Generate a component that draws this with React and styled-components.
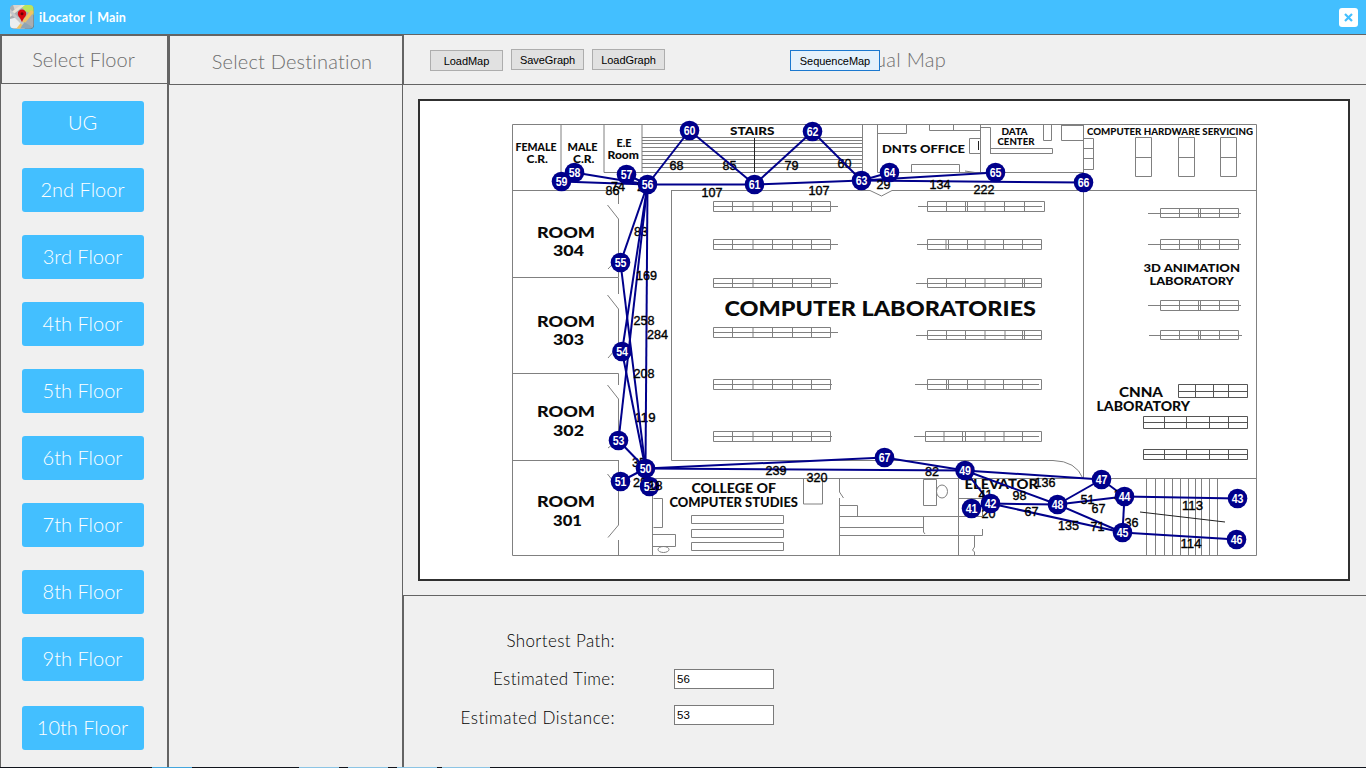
import React from 'react';
import styled, { createGlobalStyle } from 'styled-components';

const LINE = '#646464';
const BLUE = '#43bfff';
const NAVY = '#00008b';

const GlobalStyle = createGlobalStyle`
  * { box-sizing: border-box; }
  body { margin: 0; background: #f0f0f0; overflow: hidden; }
`;

const Window = styled.div`
  width: 1366px;
  height: 768px;
  display: flex;
  flex-direction: column;
  background: #f0f0f0;
  font-family: Lato, 'Liberation Sans', sans-serif;
  font-variant-ligatures: none;
`;

const TitleBar = styled.header`
  height: 35px;
  flex: none;
  display: flex;
  align-items: center;
  padding: 0 8px 0 10px;
  background: ${BLUE};
  border-bottom: 1px solid ${LINE};
`;

const AppTitle = styled.h1`
  flex: 1;
  margin: 2px 0 0 5px;
  color: #fff;
  font-size: 12.5px;
  font-weight: 700;
  line-height: 18px;
  letter-spacing: 0.1px;
  word-spacing: 1.5px;
`;

const CloseButton = styled.button`
  width: 19px;
  height: 19px;
  padding: 0;
  border: 0;
  border-radius: 3px;
  background: #fff;
  display: grid;
  place-items: center;
`;

const Body = styled.main`
  flex: 1;
  min-height: 0;
  display: grid;
  grid-template-columns: 168px 235px 1fr;
`;

const SideColumn = styled.section`
  display: flex;
  flex-direction: column;
  border-right: 1px solid ${LINE};
  border-left: 1px solid ${LINE};
`;

const ColumnHeader = styled.div`
  height: ${(p) => p.$height}px;
  flex: none;
  padding: ${(p) => p.$pad};
  border: 1px solid ${LINE};
  border-right: 0;
  display: flex;
  justify-content: center;
`;

const Heading = styled.h2`
  margin: 0;
  color: #6e6e6e;
  font-size: 20px;
  line-height: 26px;
  font-weight: 300;
  letter-spacing: ${(p) => p.$spacing || 0}px;
  white-space: nowrap;
`;

const FloorList = styled.nav`
  display: flex;
  flex-direction: column;
  gap: 23px;
  padding: 17px 0 0 21px;
`;

const FloorButton = styled.button`
  width: 122px;
  height: 44px;
  padding: 0 1px 2px 0;
  border: 0;
  border-radius: 3px;
  background: ${BLUE};
  color: #fff;
  font: 300 20px/26px Lato, sans-serif;
  letter-spacing: 0;
  &:last-child { margin-top: 2px; }
`;

const MapColumn = styled.section`
  display: flex;
  flex-direction: column;
  min-width: 0;
`;

const Toolbar = styled.div`
  position: relative;
  height: 50px;
  flex: none;
  display: flex;
  align-items: flex-start;
  gap: 8px;
  padding: 14px 0 0 26px;
  border-left: 1px solid ${LINE};
  border-bottom: 1px solid ${LINE};
`;

const ToolButton = styled.button`
  width: ${(p) => p.$width || 73}px;
  height: 21px;
  flex: none;
  margin-top: ${(p) => p.$drop || 0}px;
  padding: 1px 0 0;
  border: 1px solid ${(p) => (p.$active ? '#1b78cf' : '#adadad')};
  background: ${(p) => (p.$active ? '#e5f1fb' : '#e1e1e1')};
  color: #000;
  font: 11px/17px 'Liberation Sans', sans-serif;
  letter-spacing: -0.05px;
  white-space: nowrap;
`;

const MapTitle = styled(Heading)`
  margin: -3px 0 0 175px;
`;

const OverlayTool = styled.div`
  position: absolute;
  left: 386px;
  top: 15px;
  display: flex;
`;

const MapArea = styled.div`
  height: 510px;
  flex: none;
  padding: 14px 0 0 15px;
`;

const MapFrame = styled.div`
  width: 932px;
  height: 482px;
  border: 2px solid #303030;
  background: #fff;
  svg { display: block; }
`;

const Results = styled.div`
  flex: 1;
  display: flex;
  flex-direction: column;
  border-top: 1px solid ${LINE};
  border-left: 1px solid ${LINE};
  padding: 32px 0 0 40px;
`;

const ResultRow = styled.div`
  height: ${(p) => p.$height}px;
  display: flex;
  align-items: flex-start;
`;

const ResultLabel = styled.label`
  width: 171px;
  text-align: right;
  font-size: 17px;
  line-height: 26px;
  font-weight: 300;
  color: #000;
  white-space: nowrap;
  letter-spacing: ${(p) => p.$spacing || 0}px;
`;

const ResultInput = styled.input`
  width: 100px;
  height: 20px;
  margin: ${(p) => p.$top}px 0 0 59px;
  padding: 0 2px 1px;
  border: 1px solid #7a7a7a;
  background: #fff;
  color: #000;
  font: 11.5px/16px 'Liberation Sans', sans-serif;
  outline: 0;
`;

const TaskEdge = styled.footer`
  height: 1px;
  flex: none;
  background: linear-gradient(90deg, #10141c 152px, #43a5dc 152px 192px, #10141c 192px 299px, #8cc4e4 299px 339px, #10141c 339px 348px, #8cc4e4 348px 388px, #10141c 388px 397px, #8cc4e4 397px 437px, #10141c 437px 442px, #8cc4e4 442px 490px, #10141c 490px);
`;

const PlanLines = styled.g`
  fill: none;
  stroke: #808080;
  stroke-width: 1;
`;

const PlanText = styled.text`
  font-family: Lato, sans-serif;
  font-weight: 900;
  fill: #0a0a0a;
`;

const WeightText = styled.text`
  font-family: 'Liberation Sans', sans-serif;
  font-size: 13.5px;
  fill: #000;
  stroke: #000;
  stroke-width: 0.4px;
`;

const NodeText = styled.text`
  font-family: 'Liberation Sans', sans-serif;
  font-size: 12px;
  font-weight: 700;
  fill: #fff;
`;

const floors = ['UG', '2nd Floor', '3rd Floor', '4th Floor', '5th Floor', '6th Floor', '7th Floor', '8th Floor', '9th Floor', '10th Floor'];

const nodes = {
  41: [971.5, 508.5], 42: [990.5, 503.5], 43: [1237.5, 498.5], 44: [1124.5, 496.5], 45: [1122.5, 532.5],
  46: [1236.5, 539.5], 47: [1101.5, 479.5], 48: [1057.5, 504.5], 49: [965, 470.5], 52: [649.5, 486.5],
  50: [645.5, 468.5], 51: [620.5, 481.5], 53: [618.5, 440.5], 54: [622, 351.5], 55: [620.5, 262.5],
  57: [626.5, 174.5], 58: [574.5, 172.5], 59: [561.5, 181.5], 56: [647.5, 184.5],
  60: [689.5, 130.5], 61: [754.5, 184.5], 62: [812.5, 131.5], 64: [889.5, 172.5], 63: [861.5, 180.5],
  65: [995.5, 172.5], 66: [1083.5, 182.5], 67: [884.5, 457.5],
};

const edges = [
  [59, 56], [58, 56], [57, 56], [56, 60], [60, 61], [56, 61], [61, 62], [62, 63], [61, 63],
  [63, 64], [63, 65], [63, 66], [56, 55], [56, 54], [56, 53], [56, 50], [55, 50], [54, 50],
  [53, 50], [51, 50], [52, 50], [50, 67], [50, 49], [67, 49], [49, 47], [49, 48], [49, 42],
  [41, 42], [42, 48], [42, 45], [48, 47], [48, 44], [48, 45], [44, 47], [44, 45], [44, 43], [45, 46],
];

const underWeights = [['83', 641, 231], ['119', 645, 417], ['85', 729.5, 165], ['60', 844.5, 163], ['35', 639, 462], ['82', 932, 471]];
const weights = [
  ['74', 618, 186], ['86', 612.5, 190.5], ['24', 644, 186], ['68', 676.5, 165], ['107', 712, 192], ['79', 791.5, 165],
  ['107', 819, 190], ['29', 883.5, 184], ['134', 940, 184], ['222', 984, 189], ['169', 646.5, 275],
  ['258', 644, 320], ['284', 657.5, 334], ['208', 644, 373], ['28', 640, 482],
  ['239', 776, 470], ['320', 817, 477], ['136', 1045, 482], ['98', 1019.5, 495],
  ['41', 985.5, 494], ['20', 988.5, 513], ['67', 1031.5, 511], ['51', 1087.5, 499], ['67', 1098.5, 508],
  ['135', 1068.5, 525], ['71', 1097.5, 526], ['22', 1121, 494], ['36', 1131.5, 522], ['113', 1192.5, 505], ['114', 1191, 543],
];

/* label, left edge, baseline, width, font size */
const planTexts = [
  ['FEMALE', 515.5, 151, 41, 10.5], ['C.R.', 526.5, 162.5, 21.5, 10.5],
  ['MALE', 567.5, 151, 30, 10.5], ['C.R.', 573, 162.5, 21.5, 10.5],
  ['E.E', 616.5, 146.5, 15, 10.5], ['Room', 607.5, 158.5, 31.5, 10.5],
  ['STAIRS', 730, 134.5, 44.5, 12], ['DNTS OFFICE', 882, 153, 83, 12],
  ['DATA', 1001.5, 134.5, 26, 9.8], ['CENTER', 997.5, 144.5, 37, 9.8],
  ['COMPUTER HARDWARE SERVICING', 1087, 134.5, 166, 9.8],
  ['ROOM', 537, 237.5, 58, 15.6], ['304', 553, 255.5, 31, 15.6],
  ['ROOM', 537, 327.2, 58, 15.6], ['303', 553, 345.2, 31, 15.6],
  ['ROOM', 537, 417.2, 58, 15.6], ['302', 553, 435.5, 31, 15.6],
  ['ROOM', 537, 507, 58, 15.6], ['301', 553, 525.5, 29, 15.6],
  ['COMPUTER LABORATORIES', 724.5, 316.2, 311.5, 20.8],
  ['3D ANIMATION', 1143.5, 272, 96.5, 12], ['LABORATORY', 1149.5, 285, 84.5, 12],
  ['CNNA', 1119, 396.5, 44, 12.5], ['LABORATORY', 1096.5, 411, 93.5, 12.5],
  ['COLLEGE OF', 691.5, 493, 84.5, 12.5], ['COMPUTER STUDIES', 669.5, 507, 128.5, 12.5],
  ['ELEVATOR', 964.5, 489, 73.5, 13],
];

/* tail start, tail end, top, bottom, divider positions */
const leftDesks = [713.5, 732.5, 753, 772.5, 792.5, 811.5, 830.5];
const labDesks = [1160.5, 1179.5, 1198.5, 1200.5, 1219.5, 1238.5];
const pairDesks = [927.5, 946.5, 965.5, 985, 1005, 1022.5, 1024.5, 1041.5];
const deskRows = [
  [713, 838, 201.5, 211.5, leftDesks], [713, 838, 239.5, 249.5, leftDesks],
  [713, 838, 278.5, 287.5, leftDesks], [713, 838, 327.5, 337.5, leftDesks],
  [713, 832, 379.5, 389.5, leftDesks], [713, 832, 431.5, 441.5, leftDesks],
  [918, 1042, 201.5, 211.5, [927.5, 946.5, 965.5, 967.5, 985, 1004.5, 1024.5, 1044.5]],
  [917, 1042, 239.5, 249.5, [927.5, 946, 948.5, 967.5, 985, 1003.5, 1022.5, 1041.5]],
  [916, 1041, 278.5, 287.5, pairDesks], [916, 1041, 330.5, 339.5, pairDesks],
  [915, 1039, 379.5, 389.5, [927.5, 946.5, 948.5, 967.5, 985, 1003.5, 1022.5, 1041.5]],
  [914, 1039, 431.5, 441.5, [925.5, 944, 962.5, 965.5, 985, 1004, 1022.5, 1041.5]],
  [1148, 1241, 208.5, 217.5, labDesks], [1148, 1241, 239.5, 249.5, labDesks],
  [1148, 1241, 300.5, 310.5, labDesks], [1149, 1242, 330.5, 339.5, labDesks],
  [1178, 1248, 384.5, 397.5, [1178.5, 1195.5, 1213.5, 1228.5, 1247.5], '#555'],
  [1143, 1248, 416.5, 428.5, [1143.5, 1164.5, 1186.5, 1209.5, 1228.5, 1247.5], '#555'],
  [1143, 1248, 449.5, 459.5, [1143.5, 1164.5, 1186.5, 1209.5, 1228.5, 1247.5], '#555'],
];

const walls = [
  'M512.5 124.5H1256.5V555.5H512.5Z',
  'M561 124V190M604 124V172.5M642 124V172.5M604 172.5H862.5V124M877.5 124V172.5H1083',
  'M512 190.5H618.5V204M671.5 190.5H870L881.5 196L892 190.5H1256M1083.5 124V478',
  'M642 137.5H862M642 140.5H862M642 143.5H862M642 147.5H862M642 151.5H862M642 155.5H862M642 159.5H862M642 163.5H862M642 167.5H862',
  'M877 133.5H906.5V124M929.5 124V130.5H980.5M953.5 124V130M980.5 124V172M980.5 138.5H969.5V153.5H980.5M980.5 127.5H990.5V153.5M911.5 172V164.5H959.5V172M965 171L975 172.5',
  'M990 148.5H1052.5V153.5H990M1043.5 124V140.5H1051.5V124M1061.5 125V140.5H1083M1061.5 125.5H1083M1083 138.5H1093.5V169.5H1083M1083 148.5H1094M1083 158.5H1094',
  'M1135.5 137.5h16v39h-16ZM1135 157.5h17M1178.5 137.5h16v39h-16ZM1178 157.5h17M1220.5 137.5h16v39h-16ZM1220 157.5h17',
  'M607.5 205L618.5 219V258L608 269M512 277.5H618.5V294M607.5 295L618.5 309V346L608 358M512 373.5H618.5V385M607.5 385L618.5 399V440L608 448M512 460.5H618.5M607.5 474L618.5 488V525L608 537.5M618.5 460V474M618.5 540V555M618.5 269V277',
  'M671.5 190V460.5H1053Q1076 461 1083 478.5M641 478.5H1256M652.5 478V555M653.5 498.5h9v29h-9M652.5 534.5h23v12h-23',
  'M691.5 515.5h92v8h-92ZM691.5 529.5h92v8h-92ZM691.5 542.5h92v8h-92ZM803.5 478v26h19v-26',
  'M839.5 478V492L843.5 498M839.5 498V555M839.5 505.5h18v11M839.5 516.5H982M839.5 527.5H923.5M923.5 516V532L925 534M839.5 535.5H982.5V529M923.5 479.5h13v26h-13ZM958.5 478V555M958.5 498.5H982M982.5 492V516M974.5 535V547L972.5 550L974.5 552V555',
];

const stairTreads = [1146.5, 1155.5, 1164.5, 1172.5, 1180.5, 1188.5, 1195.5, 1201.5, 1209.5, 1217.5];

function DeskRow({ row }) {
  const [from, to, top, bottom, xs, color] = row;
  const mid = Math.floor((top + bottom) / 2) + 0.5;
  const d = `M${xs[0]} ${top}H${xs[xs.length - 1]}M${xs[0]} ${bottom}H${xs[xs.length - 1]}M${from} ${mid}H${to}`
    + xs.map((x) => `M${x} ${top}V${bottom}`).join('');
  return <path d={d} stroke={color} />;
}

function Weight({ item }) {
  const [label, x, y] = item;
  const width = label.length * 7;
  return (
    <WeightText x={x - width / 2} y={y + 4.5} textLength={width} lengthAdjust="spacingAndGlyphs">{label}</WeightText>
  );
}

function FloorPlan() {
  return (
    <svg width="928" height="478" viewBox="420 101 928 478">
      <PlanLines>
        {walls.map((d) => <path key={d} d={d} />)}
        {deskRows.map((row, i) => <DeskRow key={i} row={row} />)}
        {stairTreads.map((x) => <path key={x} d={`M${x} 479V555`} />)}
        <ellipse cx="663.5" cy="549.5" rx="5.5" ry="3" />
        <ellipse cx="942" cy="491.5" rx="5.5" ry="6.5" />
        <path d="M754.5 138V172M978.5 141V150M1140 512L1225 522" stroke="#222" />
      </PlanLines>
      {planTexts.map(([label, x, y, width, size]) => (
        <PlanText key={`${label}${x}${y}`} x={x} y={y} fontSize={size} textLength={width} lengthAdjust="spacingAndGlyphs">{label}</PlanText>
      ))}
      {underWeights.map((w) => <Weight key={w.join()} item={w} />)}
      <g stroke={NAVY} strokeWidth="2">
        {edges.map(([a, b]) => (
          <line key={`${a}-${b}`} x1={nodes[a][0]} y1={nodes[a][1]} x2={nodes[b][0]} y2={nodes[b][1]} />
        ))}
      </g>
      {weights.map((w) => <Weight key={w.join()} item={w} />)}
      {Object.entries(nodes).map(([id, [x, y]]) => (
        <g key={id}>
          <circle cx={x} cy={y} r="9.8" fill={NAVY} />
          <NodeText x={x - 5.8} y={y + 4.4} textLength="11.8" lengthAdjust="spacingAndGlyphs">{id}</NodeText>
        </g>
      ))}
      <Weight item={['18', 655.5, 485]} />
    </svg>
  );
}

function AppIcon() {
  return (
    <svg width="24" height="24" viewBox="0 0 24 24">
      <defs>
        <clipPath id="tile"><rect width="23.5" height="23.5" rx="4" /></clipPath>
      </defs>
      <rect x="0.5" y="0.8" width="23.5" height="23.2" rx="4" fill="#56727c" />
      <g clipPath="url(#tile)">
        <rect width="24" height="24" fill="#a9adb0" />
        <path d="M10 0H24V10L15 6Z" fill="#b9e45c" />
        <path d="M3 0H11L5 6Z" fill="#d8d4cf" />
        <path d="M0 14L8 12L15 24H0Z" fill="#eceef0" />
        <path d="M0 8L11 0H15L0 12Z" fill="#e9e3d6" />
        <path d="M24 7L10 24H6L21 5Z" fill="#f2c263" />
        <path d="M14 17L24 23V24H10Z" fill="#8fa5b4" />
        <path d="M0 4L14 18L12 20L0 8Z" fill="#c5c8ca" />
      </g>
      <path d="M12 17.5C11 13 7.8 12 7.8 8.8A4.2 4.2 0 0 1 16.2 8.8C16.2 12 13 13 12 17.5Z" fill="#d6060c" />
      <circle cx="12" cy="8.7" r="1.5" fill="#6d0005" />
    </svg>
  );
}

export default function App() {
  return (
    <Window>
      <GlobalStyle />
      <TitleBar>
        <AppIcon />
        <AppTitle>iLocator | Main</AppTitle>
        <CloseButton aria-label="Close">
          <svg width="9" height="9" viewBox="0 0 9 9">
            <path d="M1 1L8 8M8 1L1 8" stroke={BLUE} strokeWidth="2.2" />
          </svg>
        </CloseButton>
      </TitleBar>
      <Body>
        <SideColumn>
          <ColumnHeader $height={49} $pad="10px 2px 0 0"><Heading>Select Floor</Heading></ColumnHeader>
          <FloorList>
            {floors.map((floor) => <FloorButton key={floor}>{floor}</FloorButton>)}
          </FloorList>
        </SideColumn>
        <SideColumn>
          <ColumnHeader $height={50} $pad="12px 0 0 12px"><Heading $spacing={0.2}>Select Destination</Heading></ColumnHeader>
        </SideColumn>
        <MapColumn>
          <Toolbar>
            <ToolButton $drop={1}>LoadMap</ToolButton>
            <ToolButton>SaveGraph</ToolButton>
            <ToolButton>LoadGraph</ToolButton>
            <MapTitle $spacing={0.3}>Visual Map</MapTitle>
            <OverlayTool><ToolButton $width={90} $active>SequenceMap</ToolButton></OverlayTool>
          </Toolbar>
          <MapArea>
            <MapFrame><FloorPlan /></MapFrame>
          </MapArea>
          <Results>
            <ResultRow $height={38}><ResultLabel $spacing={0.4}>Shortest Path:</ResultLabel></ResultRow>
            <ResultRow $height={39}>
              <ResultLabel $spacing={0.35}>Estimated Time:</ResultLabel>
              <ResultInput $top={3} defaultValue="56" />
            </ResultRow>
            <ResultRow $height={39}>
              <ResultLabel $spacing={0.5}>Estimated Distance:</ResultLabel>
              <ResultInput $top={0} defaultValue="53" />
            </ResultRow>
          </Results>
        </MapColumn>
      </Body>
      <TaskEdge />
    </Window>
  );
}
